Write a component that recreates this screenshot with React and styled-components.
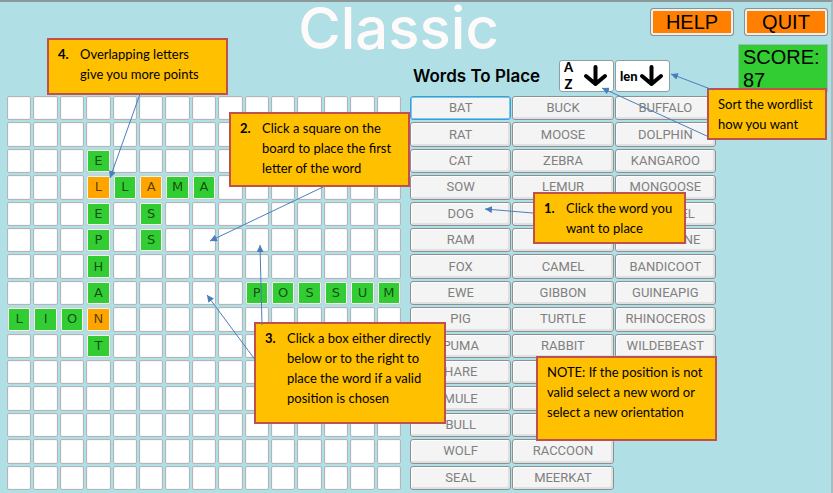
import React from "react";
import styled, { createGlobalStyle } from "styled-components";

const GlobalStyle = createGlobalStyle`
  *, *::before, *::after { box-sizing: border-box; }
  body { margin: 0; background: #b0e0e6; }
  button { font: inherit; margin: 0; padding: 0; cursor: pointer; }
`;

/* The tutorial overlay is laid out on this design canvas and scales with the page. */
const CANVAS_W = 831;
const CANVAS_H = 491;
const px = (v, total) => `${(v / total) * 100}%`;

const Page = styled.div`
  position: relative;
  display: flex;
  flex-direction: column;
  min-height: 100vh;
  background: #b0e0e6;
  border-top: 2px solid #8d989b;
  border-right: 2px solid #a9bbbf;
  font-family: "Liberation Sans", Arial, sans-serif;
  color: #000;
`;

const TopBar = styled.header`
  display: grid;
  grid-template-columns: 290fr 220fr 321fr;
  height: 42px;
  padding: 6px 3px 0 0;
`;

const Title = styled.h1`
  grid-column: 2;
  margin: 0;
  font-family: Inter, "Liberation Sans", sans-serif;
  font-size: 58px;
  font-weight: 500;
  line-height: 40px;
  text-align: center;
  white-space: nowrap;
  color: #fffafa;
`;

const Menu = styled.nav`
  display: flex;
  justify-content: flex-end;
  align-items: flex-start;
  gap: 10px;
`;

const MenuButton = styled.button`
  width: 84px;
  height: 28px;
  background: #ff8000;
  border: 1px solid #8e8f8f;
  border-radius: 3px;
  box-shadow: inset 0 0 0 2px #f0f0f0;
  font-size: 20px;
  line-height: 24px;
`;

const Columns = styled.div`
  flex: 1;
  display: grid;
  grid-template-columns: 394fr 306fr 105fr;
  grid-template-rows: 52px 1fr;
  column-gap: 9px;
  padding: 0 1px 3px 7px;
`;

const SortBar = styled.div`
  grid-column: 2;
  display: flex;
  align-items: flex-end;
  gap: 1px;
  padding: 0 46px 2px 3px;
`;

const SortHeading = styled.h2`
  flex: 1;
  margin: 0;
  font-family: Inter, "Liberation Sans", sans-serif;
  font-size: 17px;
  font-weight: 600;
  line-height: 36px;
  white-space: nowrap;
`;

const SortButton = styled.button`
  display: flex;
  align-items: center;
  justify-content: space-between;
  width: 55px;
  height: 32px;
  margin-bottom: 2px;
  padding: 0 5px 0 4px;
  background: #fff;
  border: 1px solid #8e9ea1;
  border-radius: 3px;
  font-family: Lato, "Liberation Sans", sans-serif;
  font-size: 13px;
  font-weight: 900;
  line-height: 17px;
`;

const SortLabel = styled.span`
  display: flex;
  flex-direction: column;
`;

const ArrowIcon = styled.svg`
  flex: none;
  width: 25px;
  height: 24px;
`;

const Score = styled.output`
  grid-column: 3;
  justify-self: end;
  width: 90px;
  height: 48px;
  padding: 1px 4px;
  margin-right: 2px;
  background: #32cd32;
  border: 1px solid #9bb;
  font-size: 20px;
  line-height: 23px;
`;

const Board = styled.main`
  grid-column: 1;
  display: grid;
  grid-template-columns: repeat(15, 1fr);
  grid-template-rows: repeat(15, 1fr);
  gap: 2px;
`;

const FILLS = { empty: "#fff", word: "#32cd32", overlap: "#ffa500" };

const Tile = styled.button`
  min-width: 0;
  background: ${(p) => FILLS[p.$kind]};
  border: 1px solid ${(p) => (p.$kind === "empty" ? "#b2b6b8" : "#c3d2d2")};
  border-radius: 2px;
  box-shadow: inset 0 0 0 1px ${(p) => (p.$kind === "empty" ? "#f7f7f7" : "#f2f5ee")};
  font-family: "DejaVu Sans", Verdana, sans-serif;
  font-size: 13px;
  line-height: 20px;
  color: rgba(0, 0, 0, 0.65);
`;

const WordList = styled.section`
  grid-column: 2;
  display: grid;
  grid-auto-flow: column;
  grid-template-columns: repeat(3, 1fr);
  grid-template-rows: repeat(15, 1fr);
  column-gap: 1px;
  row-gap: 2px;
`;

const WordButton = styled.button`
  background: #f4f4f4;
  border: 1px solid ${(p) => (p.$selected ? "#3c9fd3" : "#8b9193")};
  border-radius: 3px;
  box-shadow: ${(p) =>
    p.$selected
      ? "inset 0 0 0 1px #7cc4e8"
      : "inset 1px 1px 0 #fcfcfc, inset -2px -2px 0 #dfe1e1"};
  font-family: Roboto, "Liberation Sans", sans-serif;
  font-size: 13px;
  line-height: 20px;
  color: #808080;
`;

const Callout = styled.aside`
  position: absolute;
  left: ${(p) => px(p.$x, CANVAS_W)};
  top: ${(p) => px(p.$y, CANVAS_H)};
  width: ${(p) => px(p.$w, CANVAS_W)};
  min-height: ${(p) => px(p.$h, CANVAS_H)};
  display: flex;
  padding: 4px 0 4px 9px;
  background: #ffc000;
  border: 2px solid #c0504d;
  font-family: Lato, "Liberation Sans", sans-serif;
  font-size: 13px;
  line-height: 20px;
`;

const StepNumber = styled.strong`
  flex: 0 0 22px;
`;

const CalloutText = styled.p`
  margin: 0;
  white-space: nowrap;
`;

const Pointers = styled.svg`
  position: absolute;
  left: 0;
  top: 0;
  width: 100%;
  height: 100%;
  pointer-events: none;
`;

const BOARD = [
  "...............",
  "...............",
  "...E...........",
  "...lLaMA.......",
  "...E.S.........",
  "...P.S.........",
  "...H...........",
  "...A.....POSSUM",
  "LIOn...........",
  "...T...........",
  "...............",
  "...............",
  "...............",
  "...............",
  "...............",
];

const kindOf = (c) =>
  c === "." ? "empty" : c === c.toLowerCase() ? "overlap" : "word";

const WORDS = [
  ["BAT", "RAT", "CAT", "SOW", "DOG", "RAM", "FOX", "EWE", "PIG", "PUMA", "HARE", "MULE", "BULL", "WOLF", "SEAL"],
  ["BUCK", "MOOSE", "ZEBRA", "LEMUR", "", "SHEEP", "CAMEL", "GIBBON", "TURTLE", "RABBIT", "", "", "", "RACCOON", "MEERKAT"],
  ["BUFFALO", "DOLPHIN", "KANGAROO", "MONGOOSE", "SQUIRREL", "WOLVERINE", "BANDICOOT", "GUINEAPIG", "RHINOCEROS", "WILDEBEAST"],
];

const CALLOUTS = [
  { x: 47, y: 38, w: 181, h: 57, step: "4.", lines: ["Overlapping letters", "give you more points"] },
  { x: 229, y: 112, w: 181, h: 75, step: "2.", lines: ["Click a square on the", "board to place the first", "letter of the word"] },
  { x: 254, y: 322, w: 192, h: 102, step: "3.", lines: ["Click a box either directly", "below or to the right to", "place the word if a valid", "position is chosen"] },
  { x: 533, y: 192, w: 153, h: 52, step: "1.", lines: ["Click the word you", "want to place"] },
  { x: 707, y: 88, w: 120, h: 51, lines: ["Sort the wordlist", "how you want"] },
  { x: 536, y: 356, w: 181, h: 85, lines: ["NOTE: If the position is not", "valid select a new word or", "select a new orientation"] },
];

const POINTERS = [
  [140, 94, 110, 178],
  [323, 187, 210, 241],
  [262, 325, 260, 245],
  [256, 361, 207, 295],
  [533, 213, 485, 209],
  [713, 90, 671, 74],
  [709, 137, 602, 88],
];

function DownArrow() {
  return (
    <ArrowIcon viewBox="0 0 25 24" aria-hidden="true">
      <path
        d="M12.5 3V20M3 12L12.5 20L22 12"
        fill="none"
        stroke="#000"
        strokeWidth="4"
        strokeLinecap="round"
        strokeLinejoin="round"
      />
    </ArrowIcon>
  );
}

export default function App() {
  return (
    <>
      <GlobalStyle />
      <Page>
        <TopBar>
          <Title>Classic</Title>
          <Menu>
            <MenuButton type="button">HELP</MenuButton>
            <MenuButton type="button">QUIT</MenuButton>
          </Menu>
        </TopBar>
        <Columns>
          <SortBar>
            <SortHeading>Words To Place</SortHeading>
            <SortButton type="button">
              <SortLabel>
                <span>A</span>
                <span>Z</span>
              </SortLabel>
              <DownArrow />
            </SortButton>
            <SortButton type="button">
              len
              <DownArrow />
            </SortButton>
          </SortBar>
          <Score>SCORE: 87</Score>
          <Board>
            {BOARD.flatMap((row, r) =>
              [...row].map((c, i) => (
                <Tile
                  key={`${r}-${i}`}
                  type="button"
                  $kind={kindOf(c)}
                  aria-label={`Row ${r + 1}, column ${i + 1}`}
                >
                  {c === "." ? "" : c.toUpperCase()}
                </Tile>
              ))
            )}
          </Board>
          <WordList>
            {WORDS.flatMap((col, c) =>
              col.map((word, r) => (
                <WordButton key={`${c}-${r}`} type="button" $selected={word === "BAT"}>
                  {word}
                </WordButton>
              ))
            )}
          </WordList>
        </Columns>
        {CALLOUTS.map((c) => (
          <Callout key={c.lines[0]} $x={c.x} $y={c.y - 2} $w={c.w} $h={c.h}>
            {c.step && <StepNumber>{c.step}</StepNumber>}
            <CalloutText>
              {c.lines.map((line, i) => (
                <React.Fragment key={line}>
                  {i > 0 && <br />}
                  {line}
                </React.Fragment>
              ))}
            </CalloutText>
          </Callout>
        ))}
        <Pointers viewBox="0 2 831 491" preserveAspectRatio="none" aria-hidden="true">
          <defs>
            <marker id="head" viewBox="0 0 8 8" refX="8" refY="4" markerWidth="7" markerHeight="7" markerUnits="userSpaceOnUse" orient="auto">
              <path d="M0 0L8 4L0 8Z" fill="#4a7ebb" />
            </marker>
          </defs>
          {POINTERS.map(([x1, y1, x2, y2]) => (
            <line key={`${x2}-${y2}`} x1={x1} y1={y1} x2={x2} y2={y2} stroke="#4a7ebb" strokeWidth="1" markerEnd="url(#head)" />
          ))}
        </Pointers>
      </Page>
    </>
  );
}
